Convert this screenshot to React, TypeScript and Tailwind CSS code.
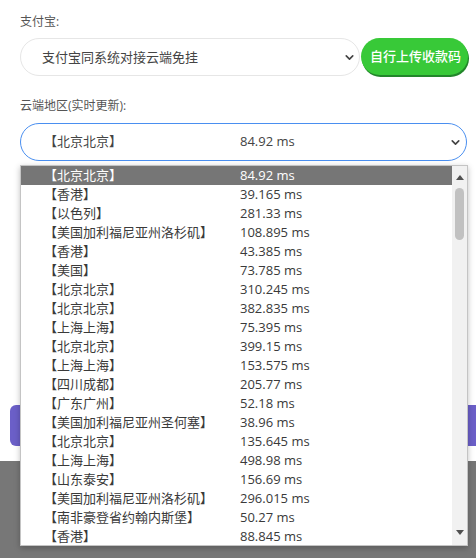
import { ChevronDown } from "lucide-react";

const REGIONS: [string, string][] = [
  ["【北京北京】", "84.92 ms"],
  ["【香港】", "39.165 ms"],
  ["【以色列】", "281.33 ms"],
  ["【美国加利福尼亚州洛杉矶】", "108.895 ms"],
  ["【香港】", "43.385 ms"],
  ["【美国】", "73.785 ms"],
  ["【北京北京】", "310.245 ms"],
  ["【北京北京】", "382.835 ms"],
  ["【上海上海】", "75.395 ms"],
  ["【北京北京】", "399.15 ms"],
  ["【上海上海】", "153.575 ms"],
  ["【四川成都】", "205.77 ms"],
  ["【广东广州】", "52.18 ms"],
  ["【美国加利福尼亚州圣何塞】", "38.96 ms"],
  ["【北京北京】", "135.645 ms"],
  ["【上海上海】", "498.98 ms"],
  ["【山东泰安】", "156.69 ms"],
  ["【美国加利福尼亚州洛杉矶】", "296.015 ms"],
  ["【南非豪登省约翰内斯堡】", "50.27 ms"],
  ["【香港】", "88.845 ms"],
];

const font = "font-['Open_Sans','Noto_Sans_CJK_SC',sans-serif]";

export default function App() {
  return (
    <div className={`relative h-[558px] w-[476px] overflow-hidden bg-[#777] ${font}`}>
      <div className="h-[461px] bg-white pt-[12px]">
        <div className="px-[20px]">
          <p className="h-[20px] text-[12px] leading-[20px] text-[#555]">支付宝:</p>

          <div className="mt-[6px] flex h-[38px] items-stretch">
            <div className="flex w-[340px] shrink-0 items-center rounded-full border border-[#e6e6e6] bg-white pl-[21px] pr-[3px]">
              <span className="flex-1 pt-[2px] text-[13px] text-[#444]">支付宝同系统对接云端免挂</span>
              <ChevronDown className="h-[13px] w-[13px] text-[#444]" strokeWidth={3} />
            </div>
            <button className="ml-[1px] flex h-[37px] w-[107px] shrink-0 items-center justify-center rounded-full bg-[#38c938] pl-[2px] text-[13px] font-medium text-white shadow-[1px_2px_0_#22862a]">
              自行上传收款码
            </button>
          </div>

          <p className="mt-[20px] h-[20px] text-[12px] leading-[20px] text-[#555]">云端地区(实时更新):</p>

          <div className="mt-[7px] flex h-[38px] w-[447px] shrink-0 items-center rounded-full border border-[#4a8ff0] bg-white pl-[23px] pr-[4px]">
            <span className="w-[196px] text-[13px] text-[#444]">【北京北京】</span>
            <span className="flex-1 text-[13px] text-[#444]">84.92 ms</span>
            <ChevronDown className="h-[13px] w-[13px] text-[#444]" strokeWidth={3} />
          </div>
        </div>

        <div className="ml-[10px] mt-[244px] h-[41px] w-[480px] rounded-[6px] bg-[#6b5fc8]" />
      </div>

      <div className="absolute left-[20px] top-[165px] flex h-[381px] w-[448px] border border-[#c4c4c4] bg-white shadow-[0_2px_6px_rgba(0,0,0,0.25)]">
        <ul className="flex-1">
          {REGIONS.map(([name, ms], i) => (
            <li
              key={i}
              className={`flex h-[19px] items-center pl-[23px] ${
                i === 0 ? "bg-[#767676] text-white" : "text-[#3a3a3a]"
              }`}
            >
              <span className="w-[196px] text-[13px]">{name}</span>
              <span className="text-[13px]">{ms}</span>
            </li>
          ))}
        </ul>
        <div className="flex w-[15px] flex-col items-center bg-[#f1f1f1]">
          <div className="mt-[9px] h-0 w-0 border-x-[4.5px] border-b-[5px] border-x-transparent border-b-[#505050]" />
          <div className="mt-[8px] h-[52px] w-[9px] rounded-full bg-[#c1c1c1]" />
          <div className="flex-1" />
          <div className="mb-[10px] h-0 w-0 border-x-[4.5px] border-t-[5px] border-x-transparent border-t-[#505050]" />
        </div>
      </div>
    </div>
  );
}
